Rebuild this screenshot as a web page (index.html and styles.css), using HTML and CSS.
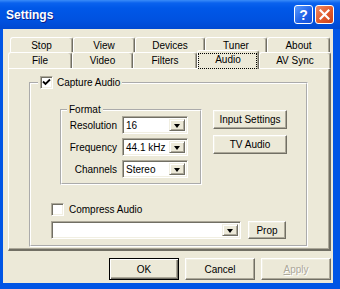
FILE: index.html
```html
<!DOCTYPE html>
<html lang="en">
<head>
  <meta charset="UTF-8" />
  <title>Settings</title>
  <link rel="stylesheet" href="styles.css">
</head>
<body>

  <div class="window">
    <div class="titlebar">
      <span class="title">Settings</span>
      <span class="cap-btn help">?</span>
      <span class="cap-btn close">
        <svg width="11" height="11" viewBox="0 0 11 11"><path d="M1.5 1.5 L9.5 9.5 M9.5 1.5 L1.5 9.5" stroke="#fff" stroke-width="2.2" stroke-linecap="square"/></svg>
      </span>
    </div>

    <div class="client">
      <div class="tabs">
        <div class="tab-row back">
          <div class="tab w63">Stop</div>
          <div class="tab w62">View</div>
          <div class="tab w70">Devices</div>
          <div class="tab w62">Tuner</div>
          <div class="tab w63">About</div>
        </div>
        <div class="tab-row front">
          <div class="tab w64">File</div>
          <div class="tab w61">Video</div>
          <div class="tab w64">Filters</div>
          <div class="tab w62 active">Audio</div>
          <div class="tab w72">AV Sync</div>
        </div>
      </div>

      <div class="panel">
        <fieldset class="group capture">
          <legend class="check-legend">
            <span class="check">
              <svg width="9" height="9" viewBox="0 0 9 9"><path d="M1 3.5 L3.5 6 L8 1.5" fill="none" stroke="#000" stroke-width="1.8"/></svg>
            </span>
            Capture Audio
          </legend>

          <div class="capture-top">
            <fieldset class="group format">
              <legend>Format</legend>
              <div class="field-grid">
                <label>Resolution</label>
                <div class="combo"><span class="value">16</span><span class="arrow"></span></div>
                <label>Frequency</label>
                <div class="combo"><span class="value">44.1 kHz</span><span class="arrow"></span></div>
                <label>Channels</label>
                <div class="combo"><span class="value">Stereo</span><span class="arrow"></span></div>
              </div>
            </fieldset>

            <div class="side-buttons">
              <button class="btn">Input Settings</button>
              <button class="btn">TV Audio</button>
            </div>
          </div>

          <div class="compress">
            <div class="check-line">
              <span class="check"></span>
              Compress Audio
            </div>
            <div class="codec-row">
              <div class="combo codec"><span class="value"></span><span class="arrow"></span></div>
              <button class="btn prop">Prop</button>
            </div>
          </div>
        </fieldset>
      </div>

      <div class="footer">
        <button class="btn default">OK</button>
        <button class="btn">Cancel</button>
        <button class="btn disabled"><u>A</u>pply</button>
      </div>
    </div>
  </div>

</body>
</html>
```

FILE: styles.css
```css
body {
  margin: 0;
  font-family: 'Liberation Sans', Arial, sans-serif;
  font-size: 10px;
  color: #000;
}

.window {
  width: 340px;
  height: 289px;
  display: flex;
  flex-direction: column;
  background: #0055e5;
}

/* title bar */
.titlebar {
  height: 29px;
  flex: none;
  display: flex;
  align-items: center;
  gap: 2px;
  padding: 0 6px;
  background: linear-gradient(to bottom, #3a8cf8 0, #0a62ee 3px, #0058e8 8px, #0052e0 20px, #0049d2 29px);
}

.title {
  flex: 1;
  color: #fff;
  font-weight: bold;
  font-size: 12px;
  text-shadow: 1px 1px #0c1f8a;
  padding-top: 1px;
}

.cap-btn {
  width: 19px;
  height: 19px;
  box-sizing: border-box;
  border: 1px solid #fff;
  border-radius: 3px;
  display: flex;
  align-items: center;
  justify-content: center;
}

.cap-btn.help {
  background: linear-gradient(135deg, #5a9bff, #1e5fe6 60%, #1650d8);
  color: #fff;
  font-weight: bold;
  font-size: 14px;
}

.cap-btn.close {
  background: linear-gradient(135deg, #f08b65, #e15a2c 55%, #c8401c);
}

/* client area */
.client {
  flex: 1;
  margin: 0 7px 6px 3px;
  padding: 8px 2px 3px 5px;
  background: #ece9d8;
  display: flex;
  flex-direction: column;
}

/* tabs */
.tab-row {
  display: flex;
}

.tab-row.back {
  height: 15px;
  margin: 0 1px 0 2px;
}

.tab-row.front {
  height: 16px;
}

.tab {
  box-sizing: border-box;
  height: 100%;
  flex: none;
  background: #ece9d8;
  border-top: 1px solid #fff;
  border-left: 1px solid #fff;
  border-right: 1px solid #716f64;
  box-shadow: inset -1px 0 #aca899;
  border-radius: 3px 3px 0 0;
  display: flex;
  align-items: center;
  justify-content: center;
}

.tab.active {
  height: 19px;
  margin-top: -2px;
  position: relative;
  z-index: 1;
  padding-bottom: 2px;
}

.tab.active::after {
  content: "";
  position: absolute;
  top: 2px;
  left: 0;
  right: 1px;
  bottom: 0;
  border: 1px dotted #000;
}

.w61 { width: 61px; }
.w62 { width: 62px; }
.w63 { width: 63px; }
.w64 { width: 64px; }
.w70 { width: 70px; }
.w72 { width: 72px; }

/* tab page */
.panel {
  height: 183px;
  box-sizing: border-box;
  border-top: 1px solid #fff;
  border-left: 1px solid #fff;
  border-right: 2px solid #716f64;
  border-bottom: 2px solid #716f64;
  box-shadow: inset -1px -1px #aca899;
  padding: 7px 21px 2px 20px;
  display: flex;
}

.group {
  margin: 0;
  padding: 0;
  border: 2px groove #fff;
  min-width: 0;
}

.group legend {
  padding: 0 2px;
}

.capture {
  flex: 1;
  border-color: #fff;
}

.check-legend {
  display: flex;
  align-items: center;
  gap: 4px;
  margin-left: 7px;
  height: 13px;
}

.check {
  width: 13px;
  height: 13px;
  box-sizing: border-box;
  flex: none;
  background: #fff;
  border: 1px solid;
  border-color: #aca899 #fff #fff #aca899;
  box-shadow: inset 1px 1px #716f64, inset -1px -1px #f1efe2;
  display: flex;
  align-items: center;
  justify-content: center;
}

.capture-top {
  display: flex;
  align-items: flex-start;
  margin-top: 15px;
  margin-left: 29px;
}

.format {
  width: 142px;
  box-sizing: border-box;
  padding: 0 12px 5px 0;
}

.format legend {
  margin-left: 5px;
  line-height: 12px;
}

.field-grid {
  display: grid;
  grid-template-columns: 55px 66px;
  column-gap: 5px;
  row-gap: 4px;
  align-items: center;
}

.field-grid label {
  text-align: right;
}

.combo {
  height: 18px;
  box-sizing: border-box;
  background: #fff;
  border: 1px solid;
  border-color: #aca899 #fff #fff #aca899;
  box-shadow: inset 1px 1px #716f64, inset -1px -1px #f1efe2;
  display: flex;
  align-items: center;
  padding: 2px 2px 2px 3px;
}

.combo .value {
  flex: 1;
}

.combo .arrow {
  width: 16px;
  align-self: stretch;
  box-sizing: border-box;
  background: #ece9d8;
  border: 1px solid;
  border-color: #f1efe2 #716f64 #716f64 #f1efe2;
  box-shadow: inset 1px 1px #fff, inset -1px -1px #aca899;
  display: flex;
  align-items: center;
  justify-content: center;
}

.combo .arrow::before {
  content: "";
  border-top: 4px solid #000;
  border-left: 3.5px solid transparent;
  border-right: 3.5px solid transparent;
  margin-top: 1px;
}

.side-buttons {
  display: flex;
  flex-direction: column;
  gap: 6px;
  margin: 6px 0 0 11px;
}

.side-buttons .btn {
  width: 74px;
  height: 19px;
}

.btn {
  font: inherit;
  color: #000;
  background: #ece9d8;
  padding: 0;
  border: 1px solid;
  border-color: #fff #716f64 #716f64 #fff;
  box-shadow: inset -1px -1px #aca899, inset 1px 1px #f1efe2;
}

.btn.default {
  border-color: #000;
  box-shadow: inset 1px 1px #fff, inset -1px -1px #716f64, inset -2px -2px #aca899;
}

.btn.disabled {
  color: #aca899;
  text-shadow: 1px 1px #fff;
}

.compress {
  margin: 18px 0 6px 20px;
}

.check-line {
  display: flex;
  align-items: center;
  gap: 5px;
  height: 13px;
}

.codec-row {
  display: flex;
  gap: 7px;
  margin-top: 5px;
}

.combo.codec {
  width: 190px;
}

.btn.prop {
  width: 38px;
  height: 18px;
}

/* dialog buttons */
.footer {
  display: flex;
  justify-content: flex-end;
  gap: 6px;
  margin-top: 7px;
}

.footer .btn {
  width: 70px;
  height: 22px;
}
```
